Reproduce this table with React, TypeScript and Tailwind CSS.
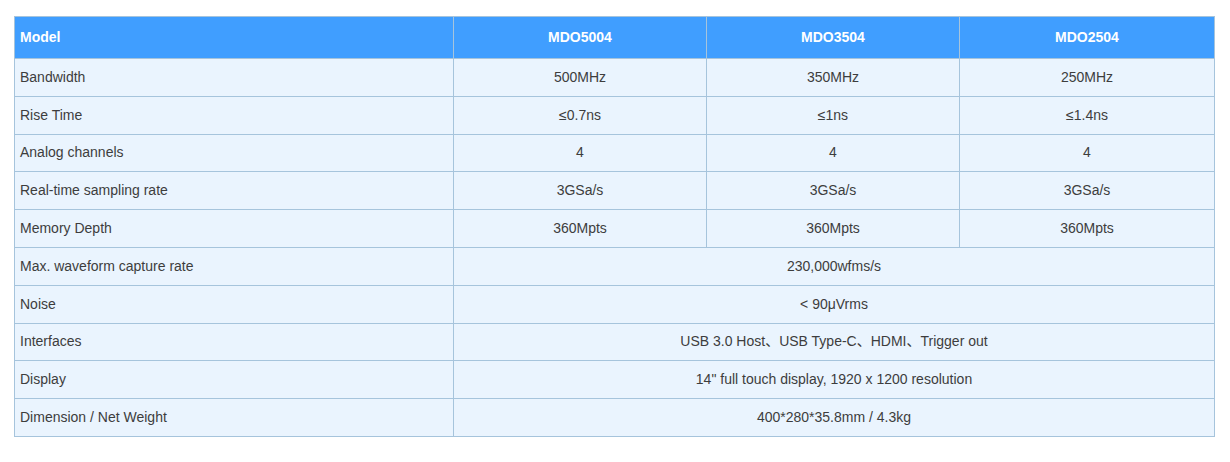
import React from 'react';

type Row = { label: string; values: string[] };

const rows: Row[] = [
  { label: 'Bandwidth', values: ['500MHz', '350MHz', '250MHz'] },
  { label: 'Rise Time', values: ['≤0.7ns', '≤1ns', '≤1.4ns'] },
  { label: 'Analog channels', values: ['4', '4', '4'] },
  { label: 'Real-time sampling rate', values: ['3GSa/s', '3GSa/s', '3GSa/s'] },
  { label: 'Memory Depth', values: ['360Mpts', '360Mpts', '360Mpts'] },
  { label: 'Max. waveform capture rate', values: ['230,000wfms/s'] },
  { label: 'Noise', values: ['< 90μVrms'] },
  { label: 'Interfaces', values: ['USB 3.0 Host、USB Type-C、HDMI、Trigger out'] },
  { label: 'Display', values: ['14" full touch display, 1920 x 1200 resolution'] },
  { label: 'Dimension / Net Weight', values: ['400*280*35.8mm / 4.3kg'] },
];

const cell = 'border border-[#a6c4dc] px-[5px] text-[14px] text-[#3d3d3d]';

const App: React.FC = () => {
  return (
    <div className="w-[1230px] h-[462px] bg-white pt-[16px] pl-[14px] font-['Liberation_Sans','Noto_Sans_CJK_SC',Arial,sans-serif]">
      <table className="w-[1200px] table-fixed border-collapse bg-[#eaf4fe]">
        <colgroup>
          <col className="w-[439px]" />
          <col className="w-[253px]" />
          <col className="w-[253px]" />
          <col className="w-[255px]" />
        </colgroup>
        <thead>
          <tr className="h-[42px] bg-[#409eff]">
            <th className="border border-[#a6c4dc] px-[5px] text-left text-[14px] font-bold text-white">Model</th>
            {['MDO5004', 'MDO3504', 'MDO2504'].map((m) => (
              <th key={m} className="border border-[#a6c4dc] text-center text-[14px] font-bold text-white">
                {m}
              </th>
            ))}
          </tr>
        </thead>
        <tbody>
          {rows.map((r) => (
            <tr key={r.label} className="h-[37.8px]">
              <td className={`${cell} text-left`}>{r.label}</td>
              {r.values.length === 1 ? (
                <td colSpan={3} className={`${cell} text-center`}>
                  {r.values[0]}
                </td>
              ) : (
                r.values.map((v, i) => (
                  <td key={i} className={`${cell} text-center`}>
                    {v}
                  </td>
                ))
              )}
            </tr>
          ))}
        </tbody>
      </table>
    </div>
  );
};

export default App;
